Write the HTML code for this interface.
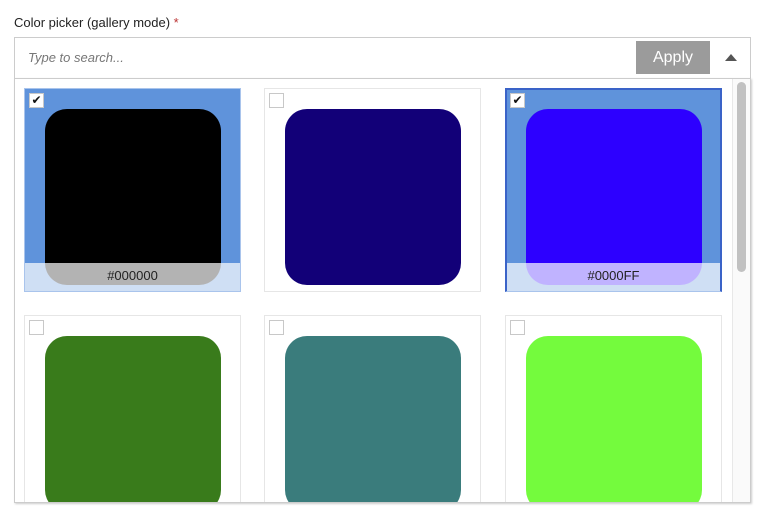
<!DOCTYPE html>
<html><head><style>
*{box-sizing:border-box;margin:0;padding:0}
body{width:768px;height:523px;background:#fff;font-family:"Liberation Sans","DejaVu Sans",sans-serif;position:relative;overflow:hidden}
.lbl{position:absolute;left:14px;top:15px;font-size:13px;color:#222}
.lbl span{color:#b33}
.hdr{position:absolute;left:14px;top:37px;width:737px;height:42px;border:1px solid #ccc;background:#fff}
.ph{position:absolute;left:13px;top:12px;font-size:13px;font-style:italic;color:#777}
.apply{position:absolute;left:621px;top:3px;width:74px;height:33px;background:#9b9b9b;color:#fff;font-size:16px;text-align:center;line-height:33px}
.arr{position:absolute;left:710px;top:16px;width:0;height:0;border-left:6px solid transparent;border-right:6px solid transparent;border-bottom:7px solid #555}
.panel{position:absolute;left:14px;top:78px;width:737px;height:425px;border:1px solid #ccc;box-shadow:1px 1px 2px rgba(0,0,0,.2);overflow:hidden;background:#fff}
.track{position:absolute;left:717px;top:0;width:18px;height:100%;background:#fafafa;border-left:1px solid #e8e8e8}
.thumb{position:absolute;left:4px;top:3px;width:9px;height:190px;border-radius:5px;background:#c1c1c1}
.tile{position:absolute;width:217px;height:204px;border:1px solid #e6e6e6;background:#fff;overflow:hidden}
.tile.sel{background:#5f93db;border-color:#a9c4ec}
.tile.sel2{background:#5f93db;border:2px solid #3a63c8;border-bottom:1px solid #a9c4ec}
.sw{position:absolute;left:20px;top:20px;width:176px;height:176px;border-radius:22px}
.band{position:absolute;left:0;top:174px;width:100%;height:29px;background:rgba(255,255,255,.7);text-align:center;font-size:13px;line-height:26px;color:#222}
.cb{position:absolute;left:4px;top:4px;width:15px;height:15px;border:1px solid #c8c8c8;background:#fff;font-size:12px;line-height:13px;text-align:center;color:#111;font-family:"DejaVu Sans",sans-serif}
</style></head><body>
<div class="lbl">Color picker (gallery mode) <span>*</span></div>
<div class="hdr"><div class="ph">Type to search...</div><div class="apply">Apply</div><div class="arr"></div></div>
<div class="panel">
<div class="tile sel" style="left:9px;top:9px"><div class="sw" style="background:#000"></div><div class="band">#000000</div><div class="cb">✔</div></div>
<div class="tile" style="left:249px;top:9px"><div class="sw" style="background:#120078"></div><div class="cb"></div></div>
<div class="tile sel2" style="left:490px;top:9px"><div class="sw" style="left:19px;top:19px;background:#2d00ff"></div><div class="band" style="top:173px">#0000FF</div><div class="cb" style="left:3px;top:3px">✔</div></div>
<div class="tile" style="left:9px;top:236px"><div class="sw" style="background:#397b1b"></div><div class="cb"></div></div>
<div class="tile" style="left:249px;top:236px"><div class="sw" style="background:#3a7c7c"></div><div class="cb"></div></div>
<div class="tile" style="left:490px;top:236px"><div class="sw" style="background:#74fb3d"></div><div class="cb"></div></div>
<div class="track"><div class="thumb"></div></div>
</div>
</body></html>
